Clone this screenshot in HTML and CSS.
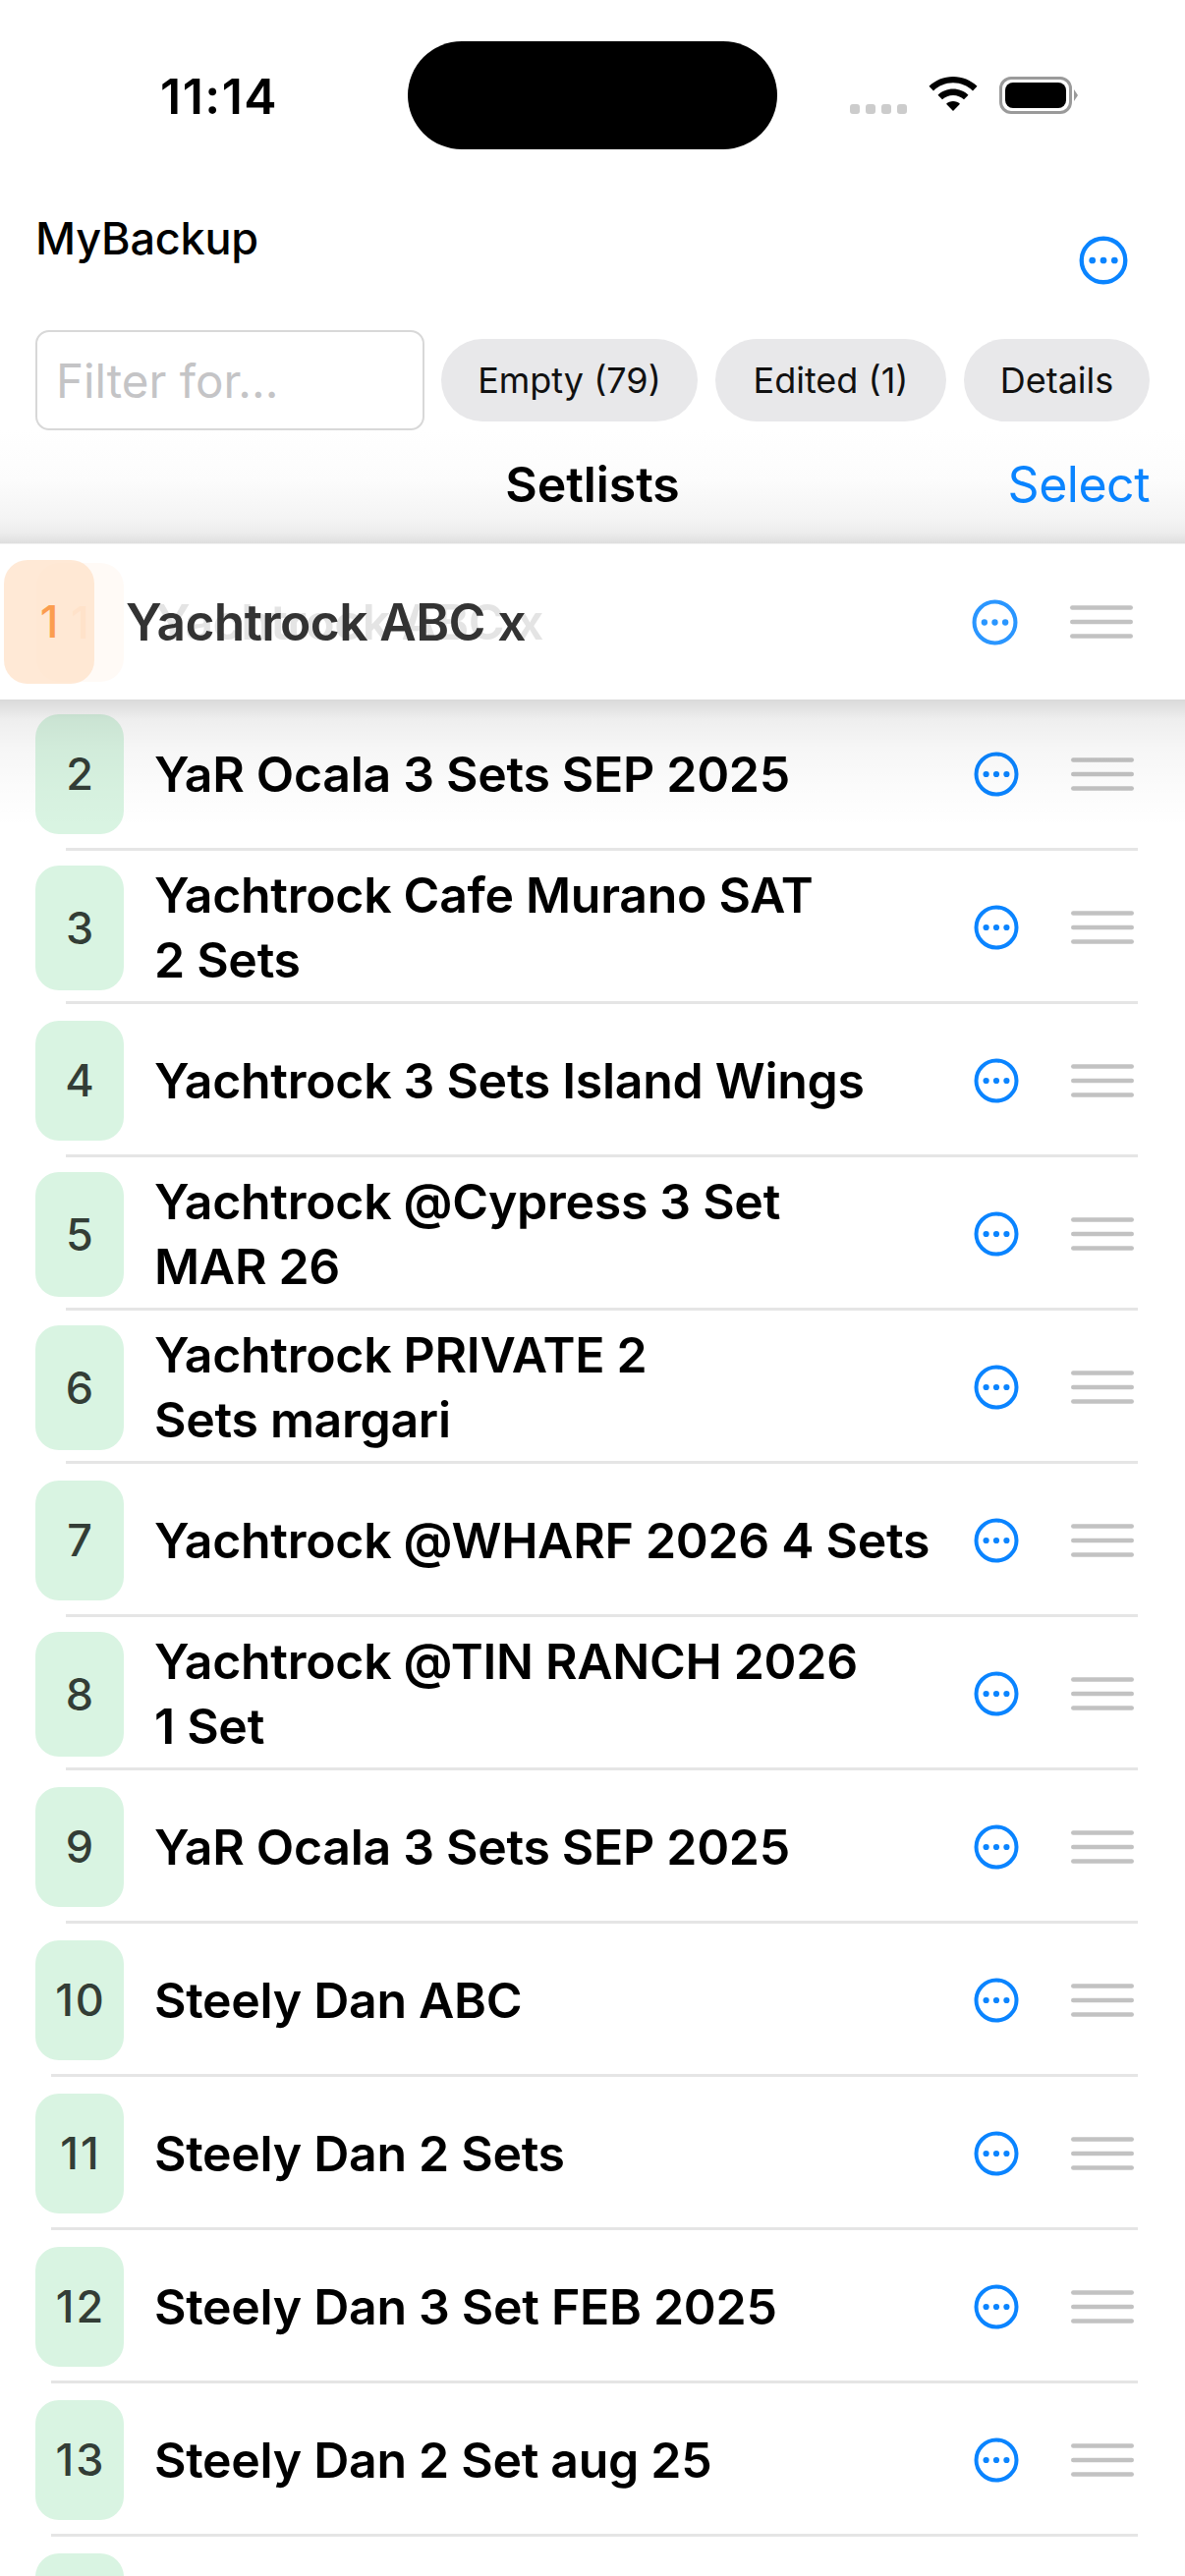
FILE: index.html
```html
<!DOCTYPE html>
<html lang="en">
<head>
    <meta charset="UTF-8">
    <meta name="viewport" content="width=device-width, initial-scale=1.0">
    <title>MyBackup - Setlists</title>
    <link rel="stylesheet" href="styles.css">
</head>
<body>
    <svg class="defs" width="0" height="0" aria-hidden="true">
        <symbol id="more" viewBox="0 0 46 46">
            <circle cx="23" cy="23" r="20.5" fill="none" stroke="currentColor" stroke-width="4"></circle>
            <circle cx="12.6" cy="23" r="3.1" fill="currentColor"></circle>
            <circle cx="23" cy="23" r="3.1" fill="currentColor"></circle>
            <circle cx="33.4" cy="23" r="3.1" fill="currentColor"></circle>
        </symbol>
        <symbol id="grip" viewBox="0 0 66 36">
            <rect x="1" y="1.250" width="64" height="4.500" rx="2.250" fill="currentColor"></rect>
            <rect x="1" y="15.750" width="64" height="4.500" rx="2.250" fill="currentColor"></rect>
            <rect x="1" y="30.250" width="64" height="4.500" rx="2.250" fill="currentColor"></rect>
        </symbol>
    </svg>

    <div class="status-bar">
        <div class="time">11:14</div>
        <div class="island"></div>
        <div class="status-icons">
            <div class="signal"><span></span><span></span><span></span><span></span></div>
            <svg class="wifi" width="50" height="38" viewBox="0 0 50 38">
                <path d="M25 0C15.500 0 7 3.600 0.500 9.800L5 14.400C10.300 9.300 17.300 6.300 25 6.300C32.700 6.300 39.700 9.300 45 14.400L49.500 9.800C43 3.600 34.500 0 25 0Z"></path>
                <path d="M25 12.500C19 12.500 13.600 14.800 9.500 18.700L14 23.300C16.900 20.600 20.700 18.900 25 18.900C29.300 18.900 33.100 20.600 36 23.300L40.500 18.700C36.400 14.800 31 12.500 25 12.500Z"></path>
                <path d="M25 25C22.300 25 19.900 26 18 27.800L25 35L32 27.800C30.100 26 27.700 25 25 25Z"></path>
            </svg>
            <div class="battery"><div class="battery-fill"></div></div>
        </div>
    </div>

    <div class="app-title-row">
        <div class="app-title">MyBackup</div>
        <svg class="more top-more"><use href="#more"></use></svg>
    </div>

    <div class="filter-row">
        <div class="filter-input">Filter for...</div>
        <div class="pill pill-empty">Empty (79)</div>
        <div class="pill pill-edited">Edited (1)</div>
        <div class="pill pill-details">Details</div>
    </div>

    <div class="nav-row">
        <div class="nav-title">Setlists</div>
        <div class="nav-select">Select</div>
    </div>

    <!-- row being dragged, its old slot shows faintly through it -->
    <div class="drag-wrap">
        <div class="drag-row">
            <div class="ghost">
                <div class="badge ghost-badge">1</div>
                <div class="ghost-name">Yachtrock ABC x</div>
            </div>
            <div class="badge drag-badge">1</div>
            <div class="drag-name">Yachtrock ABC x</div>
            <svg class="more drag-more"><use href="#more"></use></svg>
            <svg class="grip drag-grip"><use href="#grip"></use></svg>
        </div>
    </div>

    <div class="list">
        <div class="row"><div class="badge">2</div><div class="name">YaR Ocala 3 Sets SEP 2025</div><svg class="more"><use href="#more"></use></svg><svg class="grip"><use href="#grip"></use></svg></div>
        <div class="row two"><div class="badge">3</div><div class="name">Yachtrock Cafe Murano SAT<br>2 Sets</div><svg class="more"><use href="#more"></use></svg><svg class="grip"><use href="#grip"></use></svg></div>
        <div class="row"><div class="badge">4</div><div class="name">Yachtrock 3 Sets Island Wings</div><svg class="more"><use href="#more"></use></svg><svg class="grip"><use href="#grip"></use></svg></div>
        <div class="row two"><div class="badge">5</div><div class="name">Yachtrock @Cypress 3 Set<br>MAR 26</div><svg class="more"><use href="#more"></use></svg><svg class="grip"><use href="#grip"></use></svg></div>
        <div class="row two"><div class="badge">6</div><div class="name">Yachtrock PRIVATE 2<br>Sets margari</div><svg class="more"><use href="#more"></use></svg><svg class="grip"><use href="#grip"></use></svg></div>
        <div class="row"><div class="badge">7</div><div class="name">Yachtrock @WHARF 2026 4 Sets</div><svg class="more"><use href="#more"></use></svg><svg class="grip"><use href="#grip"></use></svg></div>
        <div class="row two"><div class="badge">8</div><div class="name">Yachtrock @TIN RANCH 2026<br>1 Set</div><svg class="more"><use href="#more"></use></svg><svg class="grip"><use href="#grip"></use></svg></div>
        <div class="row"><div class="badge">9</div><div class="name">YaR Ocala 3 Sets SEP 2025</div><svg class="more"><use href="#more"></use></svg><svg class="grip"><use href="#grip"></use></svg></div>
        <div class="row wide"><div class="badge">10</div><div class="name">Steely Dan ABC</div><svg class="more"><use href="#more"></use></svg><svg class="grip"><use href="#grip"></use></svg></div>
        <div class="row wide"><div class="badge">11</div><div class="name">Steely Dan 2 Sets</div><svg class="more"><use href="#more"></use></svg><svg class="grip"><use href="#grip"></use></svg></div>
        <div class="row wide"><div class="badge">12</div><div class="name">Steely Dan 3 Set FEB 2025</div><svg class="more"><use href="#more"></use></svg><svg class="grip"><use href="#grip"></use></svg></div>
        <div class="row wide"><div class="badge">13</div><div class="name">Steely Dan 2 Set aug 25</div><svg class="more"><use href="#more"></use></svg><svg class="grip"><use href="#grip"></use></svg></div>
        <div class="row wide"><div class="badge"></div></div>
    </div>
</body>
</html>
```

FILE: styles.css
```css
html, body {
    margin: 0;
    padding: 0;
}

body {
    width: 1206px;
    height: 2622px;
    overflow: hidden;
    position: relative;
    background: #ffffff;
    color: #000000;
    font-family: Inter, "Liberation Sans", sans-serif;
}

.defs {
    position: absolute;
}

/* status bar */
.status-bar {
    height: 152px;
    position: relative;
}

.time {
    position: absolute;
    left: 163px;
    top: 68px;
    font-size: 50px;
    line-height: 60px;
    font-weight: 600;
    letter-spacing: 1.5px;
}

.island {
    position: absolute;
    left: 415px;
    top: 42px;
    width: 376px;
    height: 110px;
    border-radius: 55px;
    background: #000000;
}

.status-icons {
    position: absolute;
    left: 865px;
    top: 78px;
    display: flex;
    align-items: flex-start;
}

.signal {
    display: flex;
    gap: 6px;
    margin-top: 28px;
    margin-right: 22px;
}

.signal span {
    width: 10px;
    height: 10px;
    border-radius: 3px;
    background: #cccccc;
}

.wifi {
    fill: #000000;
}

.battery {
    width: 74px;
    height: 38px;
    margin-left: 22px;
    box-sizing: border-box;
    border: 3px solid #9a9a9a;
    border-radius: 12px;
    padding: 3px;
    position: relative;
}

.battery:after {
    content: "";
    position: absolute;
    right: -9px;
    top: 10px;
    border-left: 4px solid #9a9a9a;
    border-top: 6px solid transparent;
    border-bottom: 6px solid transparent;
}

.battery-fill {
    height: 100%;
    border-radius: 8px;
    background: #000000;
}

/* header */
.app-title-row {
    height: 184px;
    position: relative;
}

.app-title {
    position: absolute;
    left: 36px;
    top: 65px;
    font-size: 45px;
    line-height: 52px;
    font-weight: 500;
    letter-spacing: -0.2px;
}

.more {
    width: 46px;
    height: 46px;
    color: #0a84ff;
    flex: none;
}

.top-more {
    position: absolute;
    left: 1098px;
    top: 88px;
    width: 50px;
    height: 50px;
}

.filter-row {
    display: flex;
    align-items: center;
    height: 102px;
    padding-left: 36px;
}

.filter-input {
    width: 396px;
    height: 102px;
    box-sizing: border-box;
    border: 2px solid #d8d8d8;
    border-radius: 14px;
    padding-left: 19px;
    font-size: 47.500px;
    line-height: 100px;
    color: #c4c4c6;
}

.pill {
    height: 84px;
    line-height: 84px;
    border-radius: 42px;
    background: #e8e8ea;
    text-align: center;
    font-size: 36px;
    color: #111111;
}

.pill-empty {
    width: 261px;
    margin-left: 17px;
}

.pill-edited {
    width: 235px;
    margin-left: 18px;
}

.pill-details {
    width: 189px;
    margin-left: 18px;
}

.nav-row {
    height: 115px;
    box-sizing: border-box;
    padding-bottom: 6px;
    display: flex;
    align-items: center;
    justify-content: center;
    position: relative;
    background: linear-gradient(to bottom, #ffffff 0, #fcfcfc 50px, #f4f4f4 90px, #ececec 105px, #dedede 115px);
}

.nav-title {
    font-size: 50px;
    font-weight: 600;
    letter-spacing: -0.1px;
}

.nav-select {
    position: absolute;
    right: 36px;
    top: 25px;
    font-size: 50px;
    line-height: 60px;
    letter-spacing: -0.5px;
    color: #0a84ff;
}

/* dragged row */
.drag-wrap {
    height: 157px;
    position: relative;
    z-index: 2;
}

/* shadow falls over the rows below */
.drag-wrap:after {
    content: "";
    position: absolute;
    left: 0;
    right: 0;
    top: 159px;
    height: 130px;
    background: linear-gradient(to bottom, rgba(0, 0, 0, 0.15) 0, rgba(0, 0, 0, 0.065) 20px, rgba(0, 0, 0, 0.035) 50px, rgba(0, 0, 0, 0.015) 90px, rgba(0, 0, 0, 0) 130px);
}

.drag-row {
    height: 159px;
    box-sizing: border-box;
    border-top: 1px solid #f2f2f2;
    display: flex;
    align-items: center;
    padding-right: 52px;
    position: relative;
    background: #ffffff;
}

.ghost {
    position: absolute;
    left: 37px;
    top: 0;
    bottom: 0;
    display: flex;
    align-items: center;
}

.ghost-name {
    margin-left: 32px;
    font-size: 50px;
    font-weight: 600;
    letter-spacing: -0.6px;
    color: #e4e4e4;
}

.badge {
    width: 90px;
    height: 122px;
    flex: none;
    box-sizing: border-box;
    padding-left: 2px;
    border-radius: 24px;
    background: #d9f4e2;
    color: #333d36;
    font-size: 45px;
    line-height: 122px;
    font-weight: 500;
    letter-spacing: 2px;
    text-align: center;
}

.two .badge {
    height: 127px;
    line-height: 127px;
}

.ghost-badge {
    width: 89px;
    height: 121px;
    line-height: 121px;
    background: #fffaf6;
    color: #fde3cd;
}

.drag-badge {
    width: 92px;
    height: 126px;
    line-height: 126px;
    margin-left: 4px;
    position: relative;
    background: rgba(255, 226, 200, 0.75);
    color: #fb9d4f;
}

.drag-name {
    flex: 1;
    margin-left: 32px;
    position: relative;
    font-size: 51.500px;
    font-weight: 600;
    letter-spacing: -0.6px;
    color: #333333;
}

.drag-more {
    width: 47px;
    height: 47px;
    color: #2a96ff;
    position: relative;
}

.drag-grip {
    width: 68px;
    height: 37px;
    margin-left: 53px;
    position: relative;
}

/* list */
.list {
    height: 2000px;
}

.row {
    height: 156px;
    box-sizing: border-box;
    display: flex;
    align-items: center;
    padding-left: 36px;
    padding-right: 51px;
    position: relative;
}

.row:after {
    content: "";
    position: absolute;
    left: 67px;
    right: 48px;
    bottom: 0;
    height: 3px;
    background: #e5e5e5;
}

.row.wide:after {
    left: 52px;
}

.name {
    flex: 1;
    margin-left: 31px;
    font-size: 50px;
    line-height: 66px;
    font-weight: 600;
    letter-spacing: -0.3px;
}

.grip {
    width: 66px;
    height: 36px;
    margin-left: 52px;
    color: #c2c2c2;
    flex: none;
}
```
